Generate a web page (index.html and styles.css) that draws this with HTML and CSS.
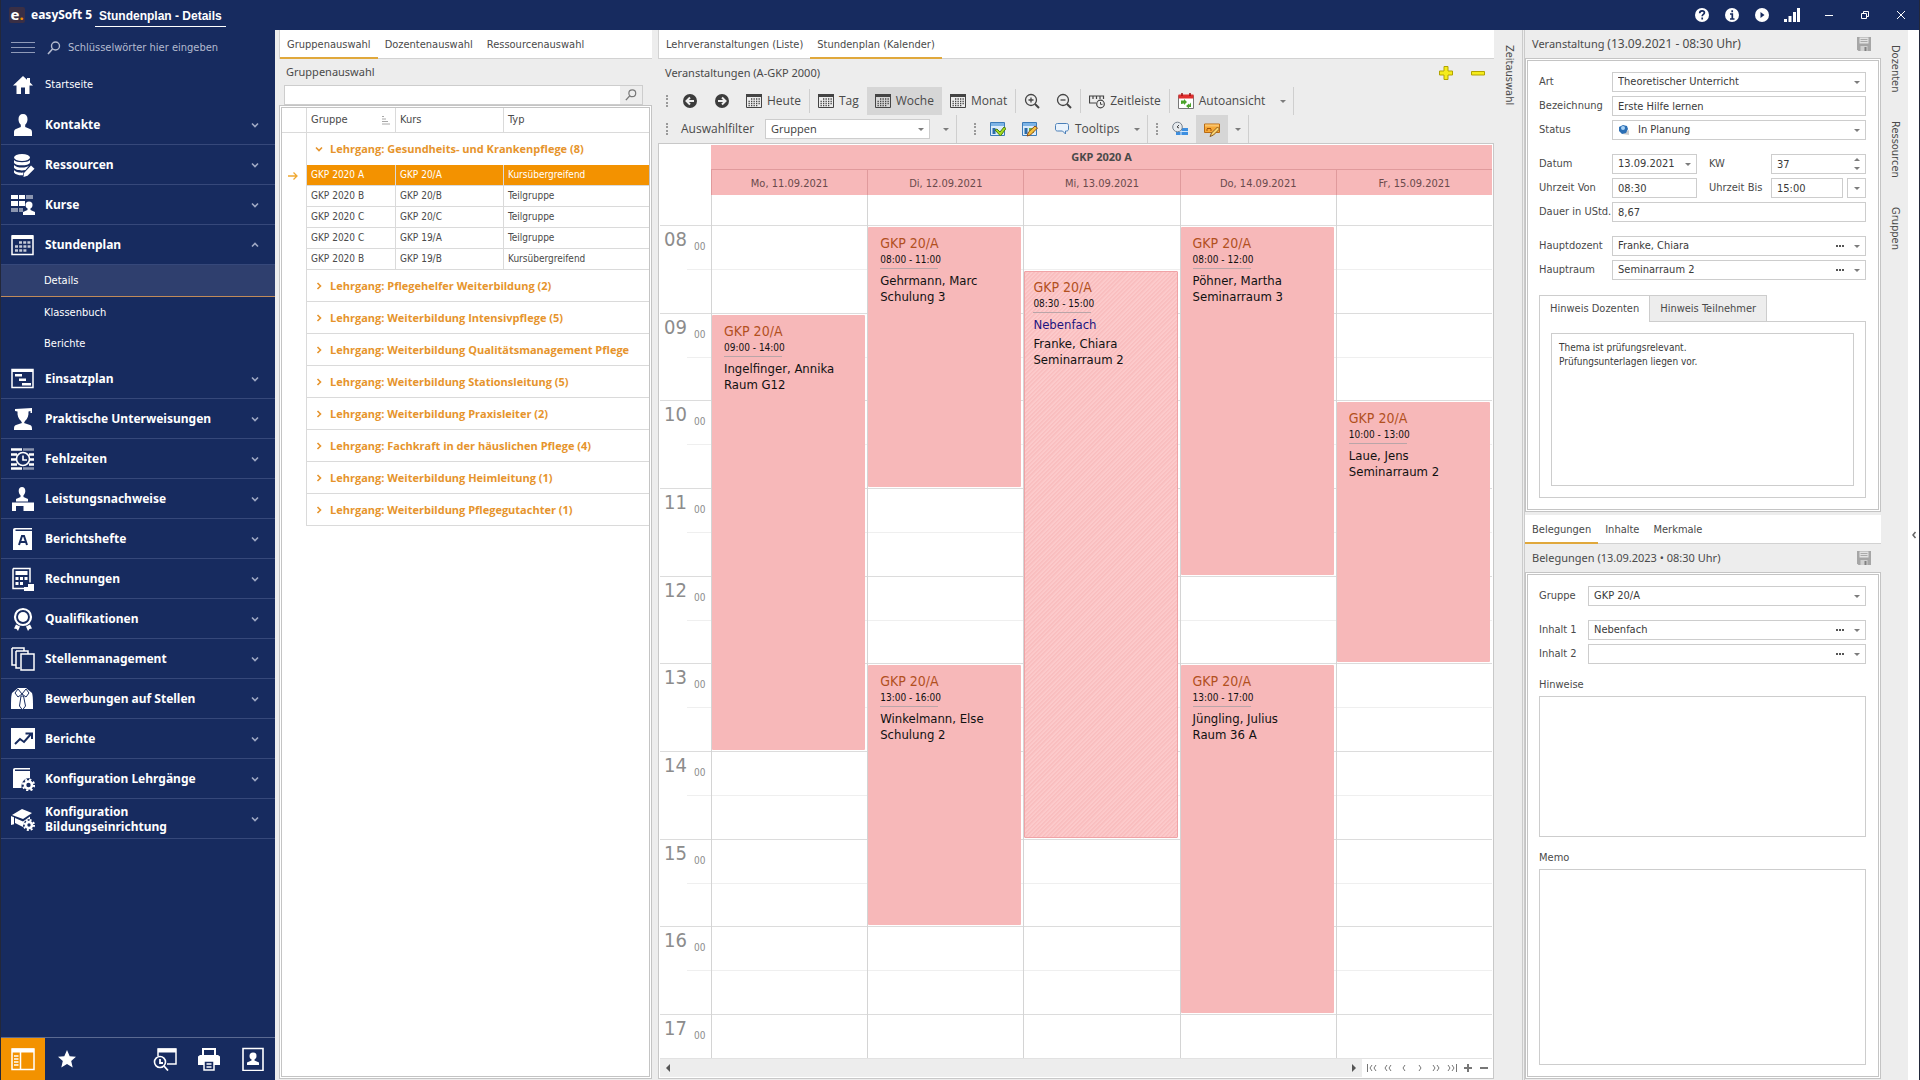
FILE: index.html
```html
<!DOCTYPE html>
<html lang="de">
<head>
    <meta charset="UTF-8">
    <meta name="viewport" content="width=device-width, initial-scale=1.0">
    <title>easySoft 5 - Stundenplan - Details</title>
    <link rel="stylesheet" href="styles.css">
</head>
<body>
    <!-- Icons -->
    <svg class="sprite" xmlns="http://www.w3.org/2000/svg">
        <symbol id="i-chevron" viewBox="0 0 8 8"><path d="M1 2.500l3 3 3-3" fill="none" stroke="currentColor" stroke-width="1.600"/></symbol>
        <symbol id="i-search" viewBox="0 0 14 14"><circle cx="8.500" cy="5" r="4" fill="none" stroke="currentColor" stroke-width="1.400"/><path d="M5.500 8L1 13" stroke="currentColor" stroke-width="1.600"/></symbol>
        <symbol id="i-home" viewBox="0 0 24 24"><path d="M12 3L2 12.500h3.500V21h4.500v-6.500h4V21h4.500v-8.500H22l-3-3V5h-3v1.800z" fill="currentColor"/></symbol>
        <symbol id="i-person" viewBox="0 0 24 24"><path d="M12 1c-3 0-4.500 2-4.500 5.200 0 2.300 1 4.300 2.300 5.600v2.200L5 16c-1.500.7-2 1.500-2 3.500V23h18v-3.500c0-2-.5-2.800-2-3.500l-4.800-2v-2.200c1.300-1.300 2.300-3.300 2.300-5.600C16.500 3 15 1 12 1z" fill="currentColor"/></symbol>
        <symbol id="i-database" viewBox="0 0 24 24"><g fill="currentColor"><ellipse cx="11" cy="4.500" rx="8" ry="3.500"/><path d="M3 7c2 3 14 3 16 0v2.500c-1 3.800-15 3.800-16 0z"/><path d="M3 12c2 3 12 3.500 15 .8L14.500 17C10 18 4 17 3 14.500z"/><path d="M3 17c1 2 6 3 9.500 2.500l-.5 2.800C8 22.500 4 21.500 3 19.500z"/><path d="M13 20l7-7.500 3.500 3.300-7 7L12.500 24z"/></g></symbol>
        <symbol id="i-course" viewBox="0 0 24 24"><g fill="currentColor"><path d="M0 2h7v4H0zM8 2h6v4H8zM0 8h7v5H0zM8 8h6v5H8z"/><path opacity=".5" d="M15 2h7v4h-7zM0 15h7v4H0zM8 15h4v4H8z"/><circle cx="18" cy="12" r="3.500"/><path d="M16.500 14h3v3l4.500 2v3H12v-3l4.500-2z"/></g></symbol>
        <symbol id="i-plan" viewBox="0 0 24 24"><path d="M1 3h21v18.500H1z" fill="none" stroke="currentColor" stroke-width="1.500"/><path d="M1 2h21v4H1z" fill="currentColor"/><path d="M8 9.500h12M4 13.500h16M4 17.500h12" stroke="currentColor" stroke-width="2.600" stroke-dasharray="3 1.200" opacity=".75"/></symbol>
        <symbol id="i-gantt" viewBox="0 0 24 24"><path d="M1 2.500h21v18H1z" fill="none" stroke="currentColor" stroke-width="1.500"/><path d="M1 2h21v3H1zM4 7h7v2.500H4zM8 11.500h7V14H8zM11 16h9v2.500h-9z" fill="currentColor"/></symbol>
        <symbol id="i-student" viewBox="0 0 24 24"><path d="M4 2l17-1v5h-1.500V4l-2 .5c.3 4-1 7.500-3.500 9.500l-1 2 6 2c1.500.6 2 1.500 2 4v1H3v-1c0-2.500.5-3.400 2-4l6-2-1-2c-2.500-2-3.800-5.500-3.500-9.500L4 4z" fill="currentColor"/></symbol>
        <symbol id="i-absence" viewBox="0 0 24 24"><path d="M0 2.500h11M0 7.500h6M0 12.500h5M0 17.500h6M0 21.500h11M18 7.500h5M19 12.500h4M18 17.500h5" stroke="currentColor" stroke-width="2.600"/><path d="M12 2.500h11M12 21.500h11" stroke="currentColor" stroke-width="2.600" opacity=".5"/><circle cx="12" cy="12" r="6.500" fill="#172b5f" stroke="currentColor" stroke-width="1.600"/><path d="M12 8.500V13h4" fill="none" stroke="currentColor" stroke-width="1.600"/></symbol>
        <symbol id="i-desk" viewBox="0 0 24 24"><g fill="currentColor"><path d="M11 0c-2 0-3.300 1.500-3.300 4 0 1.800.8 3.500 1.800 4.200V10L5 12v2.500h12V12l-4.500-2V8.200c1-.7 1.800-2.400 1.800-4.200 0-2.500-1.300-4-3.300-4z"/><path d="M1 15.500h22V25H12.500v-6H5v6H1z"/></g></symbol>
        <symbol id="i-book" viewBox="0 0 24 24"><path d="M4 1h17v1.500H4.500V4H21v19H2V3c0-1.300.7-2 2-2z" fill="currentColor"/><path d="M8 18l3-9h2l3 9M9.500 15h5" fill="none" stroke="#172b5f" stroke-width="2"/></symbol>
        <symbol id="i-calc" viewBox="0 0 24 24"><path d="M2 1.500h17v14M14 21.500H2v-20" fill="none" stroke="currentColor" stroke-width="1.500"/><path d="M4.500 4h12v4h-12zM4.500 10h3v3h-3zM9 10h3v3H9zM13.500 10h3v3h-3zM4.500 15h3v3h-3zM9 15h3v3H9zM13 20h4v-3h6v7H13z" fill="currentColor"/></symbol>
        <symbol id="i-award" viewBox="0 0 24 24"><circle cx="12" cy="10" r="8" fill="none" stroke="currentColor" stroke-width="2.200"/><circle cx="12" cy="10" r="5" fill="currentColor"/><path d="M5 17.500l4 2-2 4.500-1.500-2-2.500-.5zM19 17.500l-4 2 2 4.500 1.500-2 2.500-.5z" fill="currentColor"/></symbol>
        <symbol id="i-pages" viewBox="0 0 24 24"><path d="M1 1h12v3M1 1v17h4M5 4h12v3M5 4v17h4M10 7h13v16H10z" fill="none" stroke="currentColor" stroke-width="1.500"/></symbol>
        <symbol id="i-shirt" viewBox="0 0 24 24"><path d="M7 1h8l6 5c1 3 1 9 1 16H0C0 14 0 9 1 6z" fill="currentColor"/><path d="M7 2l4 5-4 3-3-4zM15 2l-4 5 4 3 3-4z" fill="none" stroke="#172b5f"/><path d="M10 9h2.500l2 10-3 4-3-4z" fill="currentColor" stroke="#172b5f"/></symbol>
        <symbol id="i-chart" viewBox="0 0 24 24"><path d="M0 1h24v21H0z" fill="currentColor"/><path d="M4 17l5-5 4 3 7-8M14.500 6.500H21V12" fill="none" stroke="#172b5f" stroke-width="2"/></symbol>
        <symbol id="i-config" viewBox="0 0 24 24"><path d="M4 1h15v1.500H4V4h15v7c-5 0-9 3-8.500 10H2V3c0-1.300.7-2 2-2z" fill="currentColor"/><circle cx="17.500" cy="18" r="3.500" fill="none" stroke="currentColor" stroke-width="2.600"/><circle cx="17.500" cy="18" r="5.500" fill="none" stroke="currentColor" stroke-width="2.200" stroke-dasharray="2.100 2.220"/></symbol>
        <symbol id="i-school" viewBox="0 0 24 24"><path d="M1 8l10-6 10 4-9 6zM1 9.500l2 .8v7L0 18V9zM4 11l8 3.500 7-5V12c-5 0-7 4-7 8l-8-4z" fill="currentColor"/><circle cx="18" cy="18" r="3" fill="none" stroke="currentColor" stroke-width="2.600"/><circle cx="18" cy="18" r="5" fill="none" stroke="currentColor" stroke-width="2" stroke-dasharray="2 1.927"/></symbol>
        <symbol id="i-layout" viewBox="0 0 24 24"><path d="M1 2h22v20.500H1zM9.500 5v17" fill="none" stroke="currentColor" stroke-width="1.500"/><path d="M1 1.500h22v4H1z" fill="currentColor"/><path d="M3 9h4.500M3 12h4.500M3 15h4.500M3 18h4.500" stroke="currentColor" stroke-width="1.500"/></symbol>
        <symbol id="i-star" viewBox="0 0 24 24"><path d="M12 3l2.700 6.200 6.300.5-4.800 4.300 1.500 6.500L12 17l-5.700 3.500L7.800 14 3 9.700l6.300-.5z" fill="currentColor"/></symbol>
        <symbol id="i-preview" viewBox="0 0 24 24"><path d="M5 9V2h18v15h-9" fill="none" stroke="currentColor" stroke-width="1.500"/><path d="M5 1.500h18v4H5z" fill="currentColor"/><circle cx="7" cy="15" r="5.500" fill="none" stroke="currentColor" stroke-width="1.600"/><path d="M7 12v4h3M11 19l4 4.500" fill="none" stroke="currentColor" stroke-width="1.800"/></symbol>
        <symbol id="i-print" viewBox="0 0 24 24"><path d="M6 8V2h12v6" fill="none" stroke="currentColor" stroke-width="2"/><path d="M1 9.500L3 8h18l2 1.500V18H1z" fill="currentColor"/><path d="M7 14h10v9H7z" fill="#172b5f" stroke="currentColor" stroke-width="1.500"/><path d="M9.500 17h5M9.500 20h5" stroke="currentColor" stroke-width="1.500"/></symbol>
        <symbol id="i-contact" viewBox="0 0 24 24"><path d="M2 1.500h20v22H2z" fill="none" stroke="currentColor" stroke-width="1.600"/><circle cx="12" cy="9" r="3.500" fill="currentColor"/><path d="M10.500 11h3v2.500l4.500 2V18H6v-2.500l4.500-2z" fill="currentColor"/></symbol>
        <symbol id="i-help" viewBox="0 0 16 16"><circle cx="8" cy="8" r="7" fill="#fff"/><path d="M5.700 6.200c0-1.500 1-2.400 2.400-2.400s2.300.8 2.300 2c0 1.600-2.200 1.700-2.200 3.400M8.200 10.500v2" fill="none" stroke="#172b5f" stroke-width="1.700"/></symbol>
        <symbol id="i-info" viewBox="0 0 16 16"><circle cx="8" cy="8" r="7" fill="#fff"/><path d="M8.200 3.200v2M6 7h2.300v4.500M6 12h4.500" fill="none" stroke="#172b5f" stroke-width="1.700"/></symbol>
        <symbol id="i-play" viewBox="0 0 16 16"><circle cx="8" cy="8" r="7" fill="#fff"/><path d="M6.500 5l4 3-4 3z" fill="#172b5f"/></symbol>
        <symbol id="i-signal" viewBox="0 0 16 16"><path d="M0 12h3v3H0zM4.500 9h3v6h-3zM9 5h3v10H9zM13 1h3v14h-3z" fill="#fff"/></symbol>
        <symbol id="i-prev" viewBox="0 0 16 16"><circle cx="8" cy="8" r="7" fill="#3c3c3c"/><path d="M12 8H5M8 4.500L4.500 8 8 11.500" fill="none" stroke="#eee" stroke-width="2"/></symbol>
        <symbol id="i-next" viewBox="0 0 16 16"><circle cx="8" cy="8" r="7" fill="#3c3c3c"/><path d="M4 8h7M8 4.500l3.500 3.500L8 11.500" fill="none" stroke="#eee" stroke-width="2"/></symbol>
        <symbol id="i-cal" viewBox="0 0 16 16"><path d="M.5 1.500h15v13H.5z" fill="none" stroke="#444"/><path d="M0 1h16v3H0z" fill="#444"/><path d="M5 6h9M2.500 8.300h11.500M2.500 10.500h11.500M2.500 12.700h9" stroke="#444" stroke-width="1.300" stroke-dasharray="1.300 1.200"/></symbol>
        <symbol id="i-zoomin" viewBox="0 0 16 16"><circle cx="7" cy="7" r="5.500" fill="none" stroke="#444" stroke-width="1.300"/><path d="M11 11l4 4" stroke="#444" stroke-width="2"/><path d="M4.500 7h5M7 4.500v5" stroke="#444" stroke-width="1.300"/></symbol>
        <symbol id="i-zoomout" viewBox="0 0 16 16"><circle cx="7" cy="7" r="5.500" fill="none" stroke="#444" stroke-width="1.300"/><path d="M11 11l4 4" stroke="#444" stroke-width="2"/><path d="M4.500 7h5" stroke="#444" stroke-width="1.300"/></symbol>
        <symbol id="i-timeline" viewBox="0 0 16 16"><path d="M7 10H.5V3h14v3M4 3v3M7.500 3v3M11 3v3" fill="none" stroke="#444" stroke-width="1.200"/><circle cx="11.500" cy="11" r="3.800" fill="#eee" stroke="#444" stroke-width="1.200"/><path d="M11.500 9v2.300h2" fill="none" stroke="#444"/></symbol>
        <symbol id="i-auto" viewBox="0 0 16 16"><path d="M.5 2.500h15v13H.5z" fill="#fff" stroke="#777"/><path d="M.5 1.500h15v4H.5z" fill="#e02f2f"/><path d="M4 0v3M12 0v3" stroke="#911" stroke-width="1.500"/><path d="M3 11V7.500h3V6l3 3-3 3v-1.500zM13 9.500V14h-2v1.500L8 13l3-2.500V12z" fill="#4aa32a"/></symbol>
        <symbol id="i-check" viewBox="0 0 16 16"><path d="M.5 1.500h14v13H.5z" fill="#dcecfb" stroke="#3c7bb8"/><path d="M1 2h13v3H1z" fill="#7db4e6"/><path d="M2.500 7h3v6h-3z" fill="#2d6da8"/><path d="M5 9l2-1 3 3 4-5 2 1.500-5.500 7.500z" fill="#a4dc1e" stroke="#4c7c10"/></symbol>
        <symbol id="i-editview" viewBox="0 0 16 16"><path d="M.5 1.500h14v13H.5z" fill="#dcecfb" stroke="#3c7bb8"/><path d="M1 2h13v3H1z" fill="#7db4e6"/><path d="M2.500 7h3v6h-3z" fill="#2d6da8"/><path d="M7 7h5v5H7z" fill="#6db53c"/><path d="M5 15l1.500-4L13 5l2.500 2-7 7z" fill="#f3c13d" stroke="#8c4a1e"/></symbol>
        <symbol id="i-bubble" viewBox="0 0 16 16"><path d="M3.500 2.500h9c1.400 0 2 .8 2 2v3.500c0 1.200-.6 2-2 2h-1V13l-3-3h-5c-1.400 0-2-.8-2-2V4.500c0-1.200.6-2 2-2z" fill="#eaf3fc" stroke="#4a7fb8"/></symbol>
        <symbol id="i-clocklist" viewBox="0 0 16 16"><path d="M4 7h12v7H4z" fill="#3d8fe0"/><path d="M4 10.500h12M9 7v7" stroke="#cfe4fa"/><circle cx="5.500" cy="6" r="4.800" fill="#e6eaee" stroke="#75808c"/><path d="M7 4L5 6l2 1" fill="none" stroke="#444"/></symbol>
        <symbol id="i-note" viewBox="0 0 16 16"><path d="M.5 3h15v8.500H.5z" fill="#f6a836" stroke="#b86a12"/><path d="M1 3.500h14v2H1z" fill="#fbc46c"/><path d="M3 10V8l1-1 1 1 1-1 1 1v2" fill="none" stroke="#a3520c"/><path d="M6 15.500l1.500-3.500L13.500 6l2 2-6 6z" fill="#fbd470" stroke="#8c5a1e"/></symbol>
        <symbol id="i-plus" viewBox="0 0 16 16"><path d="M6 1.500h4V6h4.500v4H10v4.500H6V10H1.500V6H6z" fill="#f5ec1c" stroke="#b3a400"/></symbol>
        <symbol id="i-minus" viewBox="0 0 16 16"><path d="M1.500 6.500h13v3.500h-13z" fill="#f5ec1c" stroke="#b3a400"/></symbol>
        <symbol id="i-save" viewBox="0 0 16 16"><path d="M1 1h14v14H2.500L1 13.500z" fill="#a6a6a6"/><path d="M3.500 1.500h9v6h-9z" fill="#e2e2e2"/><path d="M4.500 3.500h7M4.500 5.500h7" stroke="#aaa"/><path d="M4.500 10h7v5h-7z" fill="#d0d0d0"/><path d="M8.500 11h2v4h-2z" fill="#808080"/></symbol>
        <symbol id="i-sort" viewBox="0 0 10 10"><path d="M1 1.500h2M1 4h4M1 6.500h6M1 9h8" stroke="#a8a8a8"/></symbol>
        <symbol id="i-arrow" viewBox="0 0 10 10"><path d="M0 5h9M5.500 1.500L9 5 5.500 8.500" fill="none" stroke="#f0a830" stroke-width="1.300"/></symbol>
        <symbol id="i-status" viewBox="0 0 12 12"><path d="M4 10l7 1V6z" fill="#ccc"/><path d="M1 3l4-2 4 1 1 3-2 4-4 1-3-3z" fill="#2c6fb5"/><circle cx="5" cy="4" r="2" fill="#a9d2f5"/></symbol>
    </svg>

    <header class="titlebar">
        <span class="logo">e<i>.</i></span>
        <strong class="app-name">easySoft 5</strong>
        <strong class="app-page">Stundenplan - Details</strong>
        <div class="title-icons">
            <button type="button" aria-label="Hilfe"><svg><use href="#i-help"/></svg></button>
            <button type="button" aria-label="Info"><svg><use href="#i-info"/></svg></button>
            <button type="button" aria-label="Video"><svg><use href="#i-play"/></svg></button>
            <button type="button" aria-label="Verbindung"><svg><use href="#i-signal"/></svg></button>
        </div>
        <div class="window-buttons">
            <button type="button" aria-label="Minimieren"><svg viewBox="0 0 10 10"><path d="M1 5.500h8"/></svg></button>
            <button type="button" aria-label="Verkleinern"><svg viewBox="0 0 10 10"><path d="M1.500 3.500h5v5h-5zM3.500 3.500v-2h5v5h-2"/></svg></button>
            <button type="button" aria-label="Schließen"><svg viewBox="0 0 10 10"><path d="M1 1l8 8M9 1l-8 8"/></svg></button>
        </div>
    </header>

    <div class="app">
        <nav class="sidebar">
            <div class="side-search">
                <button type="button" class="burger" aria-label="Menü"><span></span><span></span><span></span></button>
                <svg><use href="#i-search"/></svg>
                <input type="text" aria-label="Suche" placeholder="Schlüsselwörter hier eingeben">
            </div>
            <a class="home" href="#"><svg><use href="#i-home"/></svg>Startseite</a>
            <a class="item" href="#"><svg><use href="#i-person"/></svg><span>Kontakte</span><svg class="chev"><use href="#i-chevron"/></svg></a>
            <a class="item" href="#"><svg><use href="#i-database"/></svg><span>Ressourcen</span><svg class="chev"><use href="#i-chevron"/></svg></a>
            <a class="item" href="#"><svg><use href="#i-course"/></svg><span>Kurse</span><svg class="chev"><use href="#i-chevron"/></svg></a>
            <a class="item open" href="#"><svg><use href="#i-plan"/></svg><span>Stundenplan</span><svg class="chev"><use href="#i-chevron"/></svg></a>
            <a class="sub active" href="#">Details</a>
            <a class="sub" href="#">Klassenbuch</a>
            <a class="sub" href="#">Berichte</a>
            <a class="item" href="#"><svg><use href="#i-gantt"/></svg><span>Einsatzplan</span><svg class="chev"><use href="#i-chevron"/></svg></a>
            <a class="item" href="#"><svg><use href="#i-student"/></svg><span>Praktische Unterweisungen</span><svg class="chev"><use href="#i-chevron"/></svg></a>
            <a class="item" href="#"><svg><use href="#i-absence"/></svg><span>Fehlzeiten</span><svg class="chev"><use href="#i-chevron"/></svg></a>
            <a class="item" href="#"><svg><use href="#i-desk"/></svg><span>Leistungsnachweise</span><svg class="chev"><use href="#i-chevron"/></svg></a>
            <a class="item" href="#"><svg><use href="#i-book"/></svg><span>Berichtshefte</span><svg class="chev"><use href="#i-chevron"/></svg></a>
            <a class="item" href="#"><svg><use href="#i-calc"/></svg><span>Rechnungen</span><svg class="chev"><use href="#i-chevron"/></svg></a>
            <a class="item" href="#"><svg><use href="#i-award"/></svg><span>Qualifikationen</span><svg class="chev"><use href="#i-chevron"/></svg></a>
            <a class="item" href="#"><svg><use href="#i-pages"/></svg><span>Stellenmanagement</span><svg class="chev"><use href="#i-chevron"/></svg></a>
            <a class="item" href="#"><svg><use href="#i-shirt"/></svg><span>Bewerbungen auf Stellen</span><svg class="chev"><use href="#i-chevron"/></svg></a>
            <a class="item" href="#"><svg><use href="#i-chart"/></svg><span>Berichte</span><svg class="chev"><use href="#i-chevron"/></svg></a>
            <a class="item" href="#"><svg><use href="#i-config"/></svg><span>Konfiguration Lehrgänge</span><svg class="chev"><use href="#i-chevron"/></svg></a>
            <a class="item" href="#"><svg><use href="#i-school"/></svg><span>Konfiguration<br>Bildungseinrichtung</span><svg class="chev"><use href="#i-chevron"/></svg></a>
            <div class="side-footer">
                <button type="button" class="on" aria-label="Navigation"><svg><use href="#i-layout"/></svg></button>
                <button type="button" aria-label="Favoriten"><svg><use href="#i-star"/></svg></button>
                <span class="spacer"></span>
                <button type="button" aria-label="Vorschau"><svg><use href="#i-preview"/></svg></button>
                <button type="button" aria-label="Drucken"><svg><use href="#i-print"/></svg></button>
                <button type="button" aria-label="Kontakt"><svg><use href="#i-contact"/></svg></button>
            </div>
        </nav>

        <!-- Gruppenauswahl -->
        <section class="groups">
            <div class="tabs">
                <a class="tab active" href="#">Gruppenauswahl</a>
                <a class="tab" href="#">Dozentenauswahl</a>
                <a class="tab" href="#">Ressourcenauswahl</a>
            </div>
            <h2 class="panel-title">Gruppenauswahl</h2>
            <div class="group-search">
                <input type="text" aria-label="Gruppe suchen">
                <button type="button" aria-label="Suchen"><svg><use href="#i-search"/></svg></button>
            </div>
            <div class="frame">
                <table>
                    <thead>
                        <tr>
                            <th class="mark"></th>
                            <th class="c-group"><div>Gruppe<svg><use href="#i-sort"/></svg></div></th>
                            <th class="c-kurs">Kurs</th>
                            <th>Typ</th>
                        </tr>
                    </thead>
                    <tbody>
                        <tr class="group open"><td class="mark"></td><td colspan="3"><svg><use href="#i-chevron"/></svg>Lehrgang: Gesundheits- und Krankenpflege (8)</td></tr>
                        <tr class="selected"><td class="mark"><svg><use href="#i-arrow"/></svg></td><td>GKP 2020 A</td><td>GKP 20/A</td><td>Kursübergreifend</td></tr>
                        <tr><td class="mark"></td><td>GKP 2020 B</td><td>GKP 20/B</td><td>Teilgruppe</td></tr>
                        <tr><td class="mark"></td><td>GKP 2020 C</td><td>GKP 20/C</td><td>Teilgruppe</td></tr>
                        <tr><td class="mark"></td><td>GKP 2020 C</td><td>GKP 19/A</td><td>Teilgruppe</td></tr>
                        <tr><td class="mark"></td><td>GKP 2020 B</td><td>GKP 19/B</td><td>Kursübergreifend</td></tr>
                        <tr class="group"><td class="mark"></td><td colspan="3"><svg><use href="#i-chevron"/></svg>Lehrgang: Pflegehelfer Weiterbildung (2)</td></tr>
                        <tr class="group"><td class="mark"></td><td colspan="3"><svg><use href="#i-chevron"/></svg>Lehrgang: Weiterbildung Intensivpflege (5)</td></tr>
                        <tr class="group"><td class="mark"></td><td colspan="3"><svg><use href="#i-chevron"/></svg>Lehrgang: Weiterbildung Qualitätsmanagement Pflege</td></tr>
                        <tr class="group"><td class="mark"></td><td colspan="3"><svg><use href="#i-chevron"/></svg>Lehrgang: Weiterbildung Stationsleitung (5)</td></tr>
                        <tr class="group"><td class="mark"></td><td colspan="3"><svg><use href="#i-chevron"/></svg>Lehrgang: Weiterbildung Praxisleiter (2)</td></tr>
                        <tr class="group"><td class="mark"></td><td colspan="3"><svg><use href="#i-chevron"/></svg>Lehrgang: Fachkraft in der häuslichen Pflege (4)</td></tr>
                        <tr class="group"><td class="mark"></td><td colspan="3"><svg><use href="#i-chevron"/></svg>Lehrgang: Weiterbildung Heimleitung (1)</td></tr>
                        <tr class="group"><td class="mark"></td><td colspan="3"><svg><use href="#i-chevron"/></svg>Lehrgang: Weiterbildung Pflegegutachter (1)</td></tr>
                    </tbody>
                </table>
            </div>
        </section>

        <!-- Kalender -->
        <main class="calendar">
            <div class="tabs">
                <a class="tab" href="#">Lehrveranstaltungen (Liste)</a>
                <a class="tab active" href="#">Stundenplan (Kalender)</a>
            </div>
            <div class="panel-head">
                <h2 class="panel-title">Veranstaltungen (A-GKP 2000)</h2>
                <button type="button" aria-label="Hinzufügen"><svg><use href="#i-plus"/></svg></button>
                <button type="button" aria-label="Entfernen"><svg><use href="#i-minus"/></svg></button>
            </div>
            <div class="toolbar">
                <span class="grip"></span>
                <button type="button" aria-label="Zurück"><svg><use href="#i-prev"/></svg></button>
                <button type="button" aria-label="Vor"><svg><use href="#i-next"/></svg></button>
                <button type="button"><svg><use href="#i-cal"/></svg>Heute</button>
                <span class="sep"></span>
                <button type="button"><svg><use href="#i-cal"/></svg>Tag</button>
                <button type="button" class="on"><svg><use href="#i-cal"/></svg>Woche</button>
                <button type="button"><svg><use href="#i-cal"/></svg>Monat</button>
                <span class="sep"></span>
                <button type="button" aria-label="Vergrößern"><svg><use href="#i-zoomin"/></svg></button>
                <button type="button" aria-label="Verkleinern"><svg><use href="#i-zoomout"/></svg></button>
                <span class="sep"></span>
                <button type="button"><svg><use href="#i-timeline"/></svg>Zeitleiste</button>
                <span class="sep"></span>
                <button type="button"><svg><use href="#i-auto"/></svg>Autoansicht</button>
                <button type="button" class="more" aria-label="Mehr"><span class="caret"></span></button>
                <span class="sep end"></span>
            </div>
            <div class="toolbar">
                <span class="grip"></span>
                <label for="filter">Auswahlfilter</label>
                <span class="field filter">
                    <select id="filter"><option>Gruppen</option></select>
                    <span class="caret"></span>
                </span>
                <button type="button" class="more" aria-label="Mehr"><span class="caret"></span></button>
                <span class="sep end"></span>
                <span class="grip wide"></span>
                <button type="button" aria-label="Auswahl prüfen"><svg><use href="#i-check"/></svg></button>
                <button type="button" aria-label="Ansicht bearbeiten"><svg><use href="#i-editview"/></svg></button>
                <button type="button"><svg><use href="#i-bubble"/></svg>Tooltips</button>
                <button type="button" class="more" aria-label="Mehr"><span class="caret"></span></button>
                <span class="sep end"></span>
                <span class="grip"></span>
                <button type="button" aria-label="Zeiten"><svg><use href="#i-clocklist"/></svg></button>
                <button type="button" class="on" aria-label="Notiz"><svg><use href="#i-note"/></svg></button>
                <button type="button" class="more" aria-label="Mehr"><span class="caret"></span></button>
                <span class="sep end"></span>
            </div>
            <div class="week-frame">
                <!-- Zeilen 4-22 sind halbe Stunden ab 08:00 -->
                <div class="week">
                    <div class="week-group">GKP 2020 A</div>
                    <div class="day-head d1">Mo, 11.09.2021</div>
                    <div class="day-head d2">Di, 12.09.2021</div>
                    <div class="day-head d3">Mi, 13.09.2021</div>
                    <div class="day-head d4">Do, 14.09.2021</div>
                    <div class="day-head d5">Fr, 15.09.2021</div>

                    <div class="hour" style="grid-row: 4 / 6"><b>08</b><small>00</small></div>
                    <div class="hour" style="grid-row: 6 / 8"><b>09</b><small>00</small></div>
                    <div class="hour" style="grid-row: 8 / 10"><b>10</b><small>00</small></div>
                    <div class="hour" style="grid-row: 10 / 12"><b>11</b><small>00</small></div>
                    <div class="hour" style="grid-row: 12 / 14"><b>12</b><small>00</small></div>
                    <div class="hour" style="grid-row: 14 / 16"><b>13</b><small>00</small></div>
                    <div class="hour" style="grid-row: 16 / 18"><b>14</b><small>00</small></div>
                    <div class="hour" style="grid-row: 18 / 20"><b>15</b><small>00</small></div>
                    <div class="hour" style="grid-row: 20 / 22"><b>16</b><small>00</small></div>
                    <div class="hour last" style="grid-row: 22 / 23"><b>17</b><small>00</small></div>

                    <div class="day d1"></div>
                    <div class="day d2"></div>
                    <div class="day d3"></div>
                    <div class="day d4"></div>
                    <div class="day d5"></div>

                    <article class="event d1" style="grid-row: 6 / 16">
                        <h3>GKP 20/A</h3><time>09:00 - 14:00</time>
                        <p>Ingelfinger, Annika</p><p>Raum G12</p>
                    </article>
                    <article class="event d2" style="grid-row: 4 / 10">
                        <h3>GKP 20/A</h3><time>08:00 - 11:00</time>
                        <p>Gehrmann, Marc</p><p>Schulung 3</p>
                    </article>
                    <article class="event d2" style="grid-row: 14 / 20">
                        <h3>GKP 20/A</h3><time>13:00 - 16:00</time>
                        <p>Winkelmann, Else</p><p>Schulung 2</p>
                    </article>
                    <article class="event hatched d3" style="grid-row: 5 / 18">
                        <h3>GKP 20/A</h3><time>08:30 - 15:00</time>
                        <p class="subject">Nebenfach</p>
                        <p>Franke, Chiara</p><p>Seminarraum 2</p>
                    </article>
                    <article class="event d4" style="grid-row: 4 / 12">
                        <h3>GKP 20/A</h3><time>08:00 - 12:00</time>
                        <p>Pöhner, Martha</p><p>Seminarraum 3</p>
                    </article>
                    <article class="event d4" style="grid-row: 14 / 22">
                        <h3>GKP 20/A</h3><time>13:00 - 17:00</time>
                        <p>Jüngling, Julius</p><p>Raum 36 A</p>
                    </article>
                    <article class="event d5" style="grid-row: 8 / 14">
                        <h3>GKP 20/A</h3><time>10:00 - 13:00</time>
                        <p>Laue, Jens</p><p>Seminarraum 2</p>
                    </article>
                </div>
                <div class="pager">
                    <div class="scroll"><span class="tri left"></span><span class="tri right"></span></div>
                    <button type="button" aria-label="Anfang"><svg viewBox="0 0 12 10"><path d="M1.500 1v8M6 2L4 5l2 3M10 2L8 5l2 3"/></svg></button>
                    <button type="button" aria-label="Seite zurück"><svg viewBox="0 0 12 10"><path d="M5 2L3 5l2 3M9 2L7 5l2 3"/></svg></button>
                    <button type="button" aria-label="Zurück"><svg viewBox="0 0 12 10"><path d="M7 2L5 5l2 3"/></svg></button>
                    <button type="button" aria-label="Vor"><svg viewBox="0 0 12 10"><path d="M5 2l2 3-2 3"/></svg></button>
                    <button type="button" aria-label="Seite vor"><svg viewBox="0 0 12 10"><path d="M3 2l2 3-2 3M7 2l2 3-2 3"/></svg></button>
                    <button type="button" aria-label="Ende"><svg viewBox="0 0 12 10"><path d="M2 2l2 3-2 3M6 2l2 3-2 3M10.500 1v8"/></svg></button>
                    <button type="button" aria-label="Mehr"><svg viewBox="0 0 12 10"><path stroke-width="2" d="M2 5h8M6 1v8"/></svg></button>
                    <button type="button" aria-label="Weniger"><svg viewBox="0 0 12 10"><path stroke-width="2" d="M2 5h8"/></svg></button>
                </div>
            </div>
        </main>

        <aside class="dock dock-left"><a href="#">Zeitauswahl</a></aside>

        <!-- Details -->
        <section class="details">
            <div class="panel-head">
                <h2 class="panel-title">Veranstaltung <span>(13.09.2021 - 08:30 Uhr)</span></h2>
                <button type="button" aria-label="Speichern"><svg><use href="#i-save"/></svg></button>
            </div>
            <form class="frame form">
                <div class="row">
                    <label for="art">Art</label>
                    <span class="field"><select id="art"><option>Theoretischer Unterricht</option></select><span class="caret"></span></span>
                </div>
                <div class="row">
                    <label for="bez">Bezeichnung</label>
                    <span class="field"><input type="text" id="bez" value="Erste Hilfe lernen"></span>
                </div>
                <div class="row">
                    <label for="status">Status</label>
                    <span class="field"><svg><use href="#i-status"/></svg><select id="status"><option>In Planung</option></select><span class="caret"></span></span>
                </div>
                <div class="row double first">
                    <label for="datum">Datum</label>
                    <span class="field"><select id="datum"><option>13.09.2021</option></select><span class="caret"></span></span>
                    <label for="kw" class="second">KW</label>
                    <span class="field"><input type="text" id="kw" value="37"><span class="spin"><span class="caret up"></span><span class="caret"></span></span></span>
                </div>
                <div class="row double">
                    <label for="von">Uhrzeit Von</label>
                    <span class="field"><input type="text" id="von" value="08:30"></span>
                    <label for="bis" class="second">Uhrzeit Bis</label>
                    <span class="split">
                        <span class="field"><input type="text" id="bis" value="15:00"></span>
                        <button type="button" class="drop" aria-label="Uhrzeit wählen"><span class="caret"></span></button>
                    </span>
                </div>
                <div class="row">
                    <label for="dauer">Dauer in UStd.</label>
                    <span class="field"><input type="text" id="dauer" value="8,67"></span>
                </div>
                <div class="row first">
                    <label for="dozent">Hauptdozent</label>
                    <span class="field"><select id="dozent"><option>Franke, Chiara</option></select><button type="button" class="dots" aria-label="Dozent suchen"></button><span class="caret"></span></span>
                </div>
                <div class="row">
                    <label for="raum">Hauptraum</label>
                    <span class="field"><select id="raum"><option>Seminarraum 2</option></select><button type="button" class="dots" aria-label="Raum suchen"></button><span class="caret"></span></span>
                </div>
                <div class="hint">
                    <div class="hint-tabs">
                        <button type="button" class="active">Hinweis Dozenten</button>
                        <button type="button">Hinweis Teilnehmer</button>
                    </div>
                    <div class="hint-box">
                        <textarea aria-label="Hinweis Dozenten">Thema ist prüfungsrelevant.
Prüfungsunterlagen liegen vor.</textarea>
                    </div>
                </div>
            </form>

            <div class="tabs">
                <a class="tab active" href="#">Belegungen</a>
                <a class="tab" href="#">Inhalte</a>
                <a class="tab" href="#">Merkmale</a>
            </div>
            <div class="panel-head">
                <h2 class="panel-title">Belegungen (13.09.2023 • 08:30 Uhr)</h2>
                <button type="button" aria-label="Speichern"><svg><use href="#i-save"/></svg></button>
            </div>
            <form class="frame form bookings">
                <div class="row">
                    <label for="gruppe">Gruppe</label>
                    <span class="field"><select id="gruppe"><option>GKP 20/A</option></select><span class="caret"></span></span>
                </div>
                <div class="row first">
                    <label for="inhalt1">Inhalt 1</label>
                    <span class="field"><select id="inhalt1"><option>Nebenfach</option></select><button type="button" class="dots" aria-label="Inhalt 1 suchen"></button><span class="caret"></span></span>
                </div>
                <div class="row">
                    <label for="inhalt2">Inhalt 2</label>
                    <span class="field"><select id="inhalt2"><option></option></select><button type="button" class="dots" aria-label="Inhalt 2 suchen"></button><span class="caret"></span></span>
                </div>
                <div class="block">
                    <label for="hinweise">Hinweise</label>
                    <textarea id="hinweise" class="notes"></textarea>
                </div>
                <div class="block grow">
                    <label for="memo">Memo</label>
                    <textarea id="memo"></textarea>
                </div>
            </form>
        </section>

        <aside class="dock dock-right">
            <a href="#">Dozenten</a>
            <a href="#">Ressourcen</a>
            <a href="#">Gruppen</a>
        </aside>
        <button type="button" class="expander" aria-label="Ausklappen"><svg viewBox="0 0 6 8"><path d="M4.500 1L2 4l2.500 3" fill="none" stroke="#666" stroke-width="1.500"/></svg></button>
    </div>
</body>
</html>
```

FILE: styles.css
```css
* {
    box-sizing: border-box;
}
body {
    margin: 0;
    height: 100vh;
    display: flex;
    flex-direction: column;
    border-left: 1px solid #23283a;
    border-right: 1px solid #23283a;
    background-color: #ededed;
    color: #4a4a4a;
    font-family: 'DejaVu Sans Condensed', 'Noto Sans', sans-serif;
    font-size: 11px;
    line-height: 16px;
    overflow: hidden;
}
a {
    color: inherit;
    text-decoration: none;
}
button {
    padding: 0;
    border: none;
    background: none;
    color: inherit;
    font: inherit;
    cursor: pointer;
}
input, select, textarea {
    margin: 0;
    padding: 0;
    border: none;
    border-radius: 0;
    outline: none;
    background: none;
    color: inherit;
    font: inherit;
    appearance: none;
}
h2, h3, p {
    margin: 0;
    font-weight: normal;
}
svg {
    display: block;
    flex: none;
    width: 16px;
    height: 16px;
    overflow: visible;
}
.sprite {
    display: none;
}
.spacer {
    flex: 1;
}

/* Titelleiste */
.titlebar {
    flex: none;
    height: 30px;
    display: flex;
    align-items: center;
    padding-left: 8px;
    background-color: #172b5f;
    color: #fff;
}
.logo {
    width: 16px;
    height: 16px;
    margin-right: 6px;
    border-radius: 2px;
    background-color: #3a2f45;
    font: bold 15px/14px 'Noto Sans', sans-serif;
    text-align: center;
}
.logo i {
    color: #f39200;
    font-style: normal;
}
.app-name {
    width: 64px;
    font-family: 'Noto Sans', sans-serif;
    font-size: 12px;
}
.app-page {
    padding: 2px 4px 0;
    border-bottom: 1px solid #fff;
    font-family: 'Liberation Sans', Arial, sans-serif;
    font-size: 12px;
    line-height: 20px;
}
.title-icons {
    margin-left: auto;
    display: flex;
    gap: 14px;
}
.window-buttons {
    display: flex;
    margin-left: 11px;
}
.window-buttons button {
    width: 36px;
    height: 30px;
}
.window-buttons svg {
    width: 10px;
    height: 10px;
    margin: 0 auto;
    fill: none;
    stroke: #fff;
}

.app {
    flex: 1;
    min-height: 0;
    display: flex;
}

/* Navigation */
.sidebar {
    flex: none;
    width: 274px;
    display: flex;
    flex-direction: column;
    background-color: #172b5f;
    color: #fff;
}
.side-search {
    height: 35px;
    display: flex;
    align-items: center;
    padding-left: 10px;
    color: #b4bbcf;
}
.side-search svg {
    width: 14px;
    height: 14px;
    margin: 0 7px 0 12px;
}
.side-search input {
    width: 180px;
}
.side-search input::placeholder {
    color: #b4bbcf;
}
.burger span {
    display: block;
    width: 24px;
    height: 1px;
    margin: 4px 0;
    background-color: #8f9ab8;
}
.home, .item {
    height: 40px;
    display: flex;
    align-items: center;
    padding: 0 16px 0 10px;
}
.item {
    border-bottom: 1px solid #36487a;
    font-family: 'Noto Sans', sans-serif;
    font-weight: bold;
    font-size: 12px;
    line-height: 15px;
}
.home > svg, .item > svg:first-child {
    width: 24px;
    height: 24px;
    margin-right: 10px;
}
.item span {
    flex: 1;
}
.item .chev {
    width: 8px;
    height: 8px;
    color: #a0a9c4;
}
.item.open .chev {
    transform: rotate(180deg);
}
.sub {
    height: 31px;
    padding-left: 43px;
    line-height: 32px;
}
.sub.active {
    height: 32px;
    border-bottom: 1px solid #c08a5a;
    background-color: #2f3f6e;
}
.side-footer {
    margin-top: auto;
    height: 43px;
    display: flex;
    border-top: 1px solid #5b6a92;
}
.side-footer button {
    width: 44px;
    display: flex;
    align-items: center;
    justify-content: center;
}
.side-footer .on {
    background-color: #f39200;
}
.side-footer svg {
    width: 24px;
    height: 24px;
}

/* Reiter und Panels */
.tabs {
    flex: none;
    height: 29px;
    display: flex;
    border-bottom: 1px solid #d2d2d2;
    background-color: #fff;
}
.tab {
    height: 29px;
    padding: 0 7px;
    line-height: 30px;
}
.tab.active {
    border-bottom: 2px solid #e0a83c;
}
.panel-title {
    font-family: 'Noto Sans', sans-serif;
    font-size: 11px;
    line-height: 28px;
}
.panel-head {
    flex: none;
    height: 28px;
    display: flex;
    align-items: center;
}
.panel-head .panel-title {
    flex: 1;
}
.panel-title span {
    font-size: 12px;
}
.frame {
    border: 3px double #c4c4c4;
    background-color: #fff;
}

/* Gruppen */
.groups {
    flex: none;
    width: 373px;
    margin: 0 6px 1px 4px;
    display: flex;
    flex-direction: column;
}
.groups .tabs, .calendar .tabs {
    border-left: 1px solid #d2d2d2;
}
.groups .panel-title {
    height: 26px;
    padding-left: 7px;
    line-height: 26px;
}
.group-search {
    height: 20px;
    display: flex;
    margin: 0 9px 0 5px;
    border: 1px solid #cdcdcd;
    background-color: #fff;
}
.group-search input {
    flex: 1;
    padding: 0 5px;
}
.group-search button {
    width: 22px;
    background-color: #ededed;
    color: #777;
}
.group-search svg {
    width: 12px;
    height: 12px;
    margin: 0 auto;
}
.groups .frame {
    flex: 1;
}
table {
    width: 100%;
    border-collapse: separate;
    border-spacing: 0;
    table-layout: fixed;
}
th, td {
    height: 21px;
    padding: 0 4px;
    border-bottom: 1px solid #dadada;
    border-left: 1px solid #dadada;
    font-size: 10px;
    font-weight: normal;
    line-height: 12px;
    text-align: left;
    white-space: nowrap;
}
th {
    height: 25px;
    font-size: 11px;
}
th div {
    display: flex;
    align-items: center;
    justify-content: space-between;
}
th svg {
    width: 10px;
    height: 10px;
}
.mark {
    width: 24px;
    border-left: none;
}
td.mark {
    border-bottom: none;
}
.mark svg {
    width: 10px;
    height: 10px;
    margin-left: 2px;
}
.c-group {
    width: 89px;
}
.c-kurs {
    width: 108px;
}
.group td {
    height: 32px;
    padding-left: 8px;
    color: #e6942c;
    font-family: 'Open Sans', 'Noto Sans', sans-serif;
    font-size: 11px;
    font-weight: bold;
}
.group td svg {
    display: inline-block;
    width: 8px;
    height: 8px;
    margin-right: 7px;
    transform: rotate(-90deg);
}
.group.open td {
    border-bottom: none;
}
.group.open svg {
    transform: none;
}
.selected td:not(.mark) {
    background-color: #f39200;
    color: #fff;
}

/* Kalender */
.calendar {
    flex: 1;
    min-width: 0;
    margin-bottom: 1px;
    display: flex;
    flex-direction: column;
}
.calendar .panel-head {
    padding: 0 8px 0 7px;
    gap: 16px;
}
.toolbar {
    flex: none;
    height: 28px;
    display: flex;
    align-items: center;
    font-family: 'Open Sans', 'Noto Sans', sans-serif;
    font-size: 12px;
}
.toolbar button {
    height: 28px;
    display: flex;
    align-items: center;
    gap: 5px;
    padding: 0 8px;
}
.toolbar .on {
    background-color: #d6d6d6;
}
.toolbar .more {
    width: 20px;
    padding: 0;
    justify-content: center;
}
.toolbar label {
    width: 91px;
    padding-left: 7px;
}
.grip {
    width: 2px;
    height: 12px;
    margin: 0 6px 0 8px;
    border-left: 2px dotted #9a9a9a;
}
.grip.wide {
    margin-left: 17px;
}
.sep {
    width: 1px;
    height: 24px;
    background-color: #cfcfcf;
}
.sep.end {
    height: 28px;
}
.caret {
    flex: none;
    width: 0;
    height: 0;
    border: 3px solid transparent;
    border-top-color: #7c7c7c;
    border-bottom: none;
    pointer-events: none;
}
.caret.up {
    border-top: none;
    border-bottom: 3px solid #7c7c7c;
}
.field {
    height: 20px;
    min-width: 0;
    display: flex;
    align-items: center;
    padding: 0 5px;
    border: 1px solid #cdcdcd;
    background-color: #fff;
    color: #3a3a3a;
}
.field input, .field select {
    flex: 1;
    width: 0;
    min-width: 0;
    height: 18px;
}
.filter {
    width: 165px;
    margin-right: 6px;
}
.filter select {
    font-size: 11px;
}
.week-frame {
    flex: 1;
    min-height: 0;
    display: flex;
    flex-direction: column;
    padding: 1px;
    border: 1px solid #c8c8c8;
    background-color: #fff;
}
.week {
    flex: 1;
    min-height: 0;
    display: grid;
    grid-template-columns: 51px repeat(5, minmax(0, 1fr));
    grid-template-rows: 25px 25px 30px repeat(19, minmax(0, 1fr));
    border-bottom: 1px solid #e2e2e2;
}
.week-group {
    grid-column: 2 / -1;
    grid-row: 1;
    border-bottom: 1px solid #e09a9c;
    background-color: #f7b8b9;
    font-family: 'Noto Sans', sans-serif;
    font-weight: bold;
    line-height: 24px;
    text-align: center;
}
.day-head {
    grid-row: 2;
    border-left: 1px solid #e09a9c;
    background-color: #f7b8b9;
    color: #6a4a4c;
    line-height: 28px;
    text-align: center;
}
.day {
    grid-row: 3 / -1;
    border-left: 1px solid #d4d4d4;
}
.d1 { grid-column: 2; }
.d2 { grid-column: 3; }
.d3 { grid-column: 4; }
.d4 { grid-column: 5; }
.d5 { grid-column: 6; }
.hour {
    grid-column: 1 / -1;
    display: flex;
    padding: 3px 0 0 4px;
    border-top: 1px solid #dcdcdc;
    background: linear-gradient(#efefef, #efefef) right center / calc(100% - 27px) 1px no-repeat;
    color: #8c8c8c;
}
.hour.last {
    background: none;
}
.hour b {
    width: 30px;
    font-size: 20px;
    font-weight: normal;
    line-height: 20px;
}
.hour small {
    font-size: 10px;
    line-height: 36px;
}
.event {
    margin: 2px 2px 1px 1px;
    padding: 8px 0 0 12px;
    border-radius: 1px;
    background-color: #f7b8b9;
    color: #111;
    font-size: 13px;
}
.event h3 {
    color: #b2501e;
    font-size: 14px;
    line-height: 17px;
}
.event time {
    display: block;
    width: 58px;
    margin-bottom: 4px;
    border-bottom: 1px solid #b9a5a8;
    font-size: 10px;
    line-height: 16px;
    white-space: nowrap;
}
.event .subject {
    margin-bottom: 3px;
    color: #1c1480;
}
.hatched {
    padding: 7px 0 0 8px;
    border: 1px solid #f0a3a6;
    background: repeating-linear-gradient(135deg, #f9bebf 0, #f9bebf 1px, #fccacb 2px, #fccacb 3px);
}
.pager {
    flex: none;
    height: 18px;
    display: flex;
    align-items: center;
}
.pager svg {
    width: 12px;
    height: 10px;
    margin: 0 2px;
    fill: none;
    stroke: #777;
}
.pager button:first-of-type {
    margin-left: 2px;
}
.scroll {
    flex: 1;
    height: 18px;
    display: flex;
    align-items: center;
    justify-content: space-between;
    padding: 0 6px;
    background-color: #ededed;
}
.tri {
    border: 4px solid transparent;
}
.tri.left {
    border-right-color: #555;
    border-left: none;
}
.tri.right {
    border-left-color: #555;
    border-right: none;
}

/* Seitliche Reiter */
.dock {
    flex: none;
    width: 27px;
    display: flex;
    flex-direction: column;
    gap: 29px;
    padding: 15px 0 0 2px;
}
.dock a {
    writing-mode: vertical-rl;
    line-height: 26px;
}
.dock-left {
    width: 31px;
    padding-left: 4px;
    border-right: 3px double #cbcbcb;
}

/* Details */
.details {
    flex: none;
    width: 356px;
    margin-bottom: 1px;
    display: flex;
    flex-direction: column;
}
.details .panel-head {
    padding: 0 9px 0 7px;
}
.form {
    display: flex;
    flex-direction: column;
    gap: 4px;
    padding: 11px 12px 11px 11px;
}
.form label {
    line-height: 20px;
}
.row {
    display: grid;
    grid-template-columns: 73px minmax(0, 1fr);
}
.row.first {
    margin-top: 10px;
}
.row.double {
    grid-template-columns: 73px 85px 74px minmax(0, 1fr);
}
.second {
    padding-left: 12px;
}
.field svg {
    width: 12px;
    height: 12px;
    margin-right: 8px;
}
.split {
    display: flex;
    gap: 4px;
}
.split .field {
    flex: 1;
}
.drop {
    width: 19px;
    height: 20px;
    display: flex;
    align-items: center;
    justify-content: center;
    border: 1px solid #cdcdcd;
}
.spin {
    display: flex;
    flex-direction: column;
    gap: 6px;
}
.dots {
    width: 8px;
    margin-right: 10px;
    border-top: 2px dotted #555;
}
.hint {
    margin-top: 11px;
}
.hint-tabs {
    display: flex;
}
.hint-tabs button {
    height: 26px;
    padding: 0 10px;
    border: 1px solid #cdcdcd;
    border-width: 1px 1px 0 0;
    background-color: #ededed;
}
.hint-tabs .active {
    position: relative;
    height: 27px;
    margin-bottom: -1px;
    border-left-width: 1px;
    background-color: #fff;
}
.hint-box {
    padding: 11px;
    border: 1px solid #cdcdcd;
}
textarea {
    display: block;
    width: 100%;
    border: 1px solid #cdcdcd;
    resize: none;
}
.hint-box textarea {
    height: 153px;
    padding: 7px;
    color: #3a3a3a;
    font-size: 10px;
    line-height: 14px;
}
.details .tabs {
    margin-top: 3px;
}
.details .frame:last-child {
    flex: 1;
}
.bookings .row {
    grid-template-columns: 49px minmax(0, 1fr);
}
.block {
    display: flex;
    flex-direction: column;
    margin-top: 7px;
}
.block label {
    height: 21px;
}
.notes {
    height: 141px;
}
.grow, .grow textarea {
    flex: 1;
}

.expander {
    flex: none;
    width: 11px;
    padding: 0 0 40px 3px;
    background-color: #fff;
}
.expander svg {
    width: 6px;
    height: 8px;
}
```
